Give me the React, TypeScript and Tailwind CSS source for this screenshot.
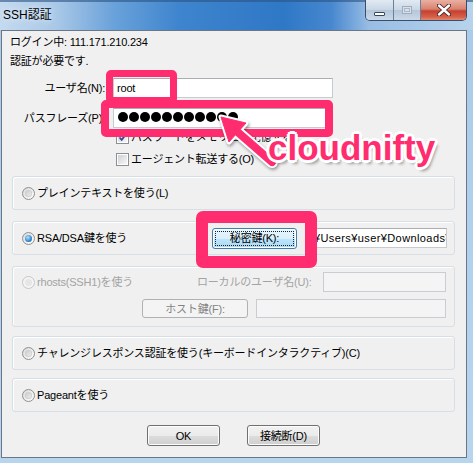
import React from 'react';

const Radio: React.FC<{ checked?: boolean; disabled?: boolean }> = ({ checked, disabled }) => {
  if (disabled) {
    return (
      <span className="flex h-[13px] w-[13px] shrink-0 items-center justify-center rounded-full border border-[#c4c7ca] bg-[#f4f4f4]">
        <span className="h-[7px] w-[7px] rounded-full bg-[#e6e6e6]" />
      </span>
    );
  }
  return (
    <span className="flex h-[13px] w-[13px] shrink-0 items-center justify-center rounded-full border border-[#8e8f8f] bg-[linear-gradient(135deg,#d9d9d9,#ffffff)]">
      {checked ? (
        <span className="h-[7px] w-[7px] rounded-full bg-[radial-gradient(circle_at_40%_35%,#b4e3fc_0%,#3b8fd6_55%,#0d4f92_100%)]" />
      ) : (
        <span className="h-[7px] w-[7px] rounded-full bg-[linear-gradient(135deg,#c6c6c6,#f4f4f4)] shadow-[inset_0_0_0_1px_#d2d2d2]" />
      )}
    </span>
  );
};

const Check: React.FC<{ checked?: boolean }> = ({ checked }) => (
  <span className="flex h-[13px] w-[13px] shrink-0 items-center justify-center border border-[#8e8f8f] bg-white">
    <span className="flex h-[9px] w-[9px] items-center justify-center bg-[linear-gradient(135deg,#cdd1d6,#f7f7f7)]">
      {checked && (
        <svg width="9" height="9" viewBox="0 0 9 9">
          <path d="M1.5 4.5 L3.7 6.8 L7.6 1.8" fill="none" stroke="#2a4f8a" strokeWidth="1.8" />
        </svg>
      )}
    </span>
  </span>
);

const Field: React.FC<{ className: string; disabled?: boolean; children?: React.ReactNode }> = ({ className, disabled, children }) => (
  <div
    className={`flex items-center overflow-hidden whitespace-nowrap border ${
      disabled ? 'border-[#c9ccd1] bg-[#f4f4f4]' : 'border-[#c6cbd2] border-t-[#abadb3] bg-white'
    } ${className}`}
  >
    {children}
  </div>
);

const Button: React.FC<{ className: string; focused?: boolean; disabled?: boolean; children: React.ReactNode }> = ({
  className,
  focused,
  disabled,
  children,
}) => {
  if (disabled) {
    return (
      <div className={`flex items-center justify-center rounded-[3px] border border-[#adb2b5] bg-[#f4f4f4] text-[#838383] ${className}`}>
        {children}
      </div>
    );
  }
  if (focused) {
    return (
      <div className={`flex items-center justify-center rounded-[3px] border border-[#3c7fb1] bg-[linear-gradient(#eaf6fd_0%,#d9f0fc_50%,#bee6fd_51%,#a7d9f5_100%)] p-[2px] shadow-[inset_0_0_0_1px_#ffffff] ${className}`}>
        <span className="flex h-full w-full items-center justify-center border border-dotted border-[#222]">{children}</span>
      </div>
    );
  }
  return (
    <div className={`flex items-center justify-center rounded-[3px] border border-[#707070] bg-[linear-gradient(#f2f2f2_0%,#ebebeb_50%,#dddddd_51%,#cfcfcf_100%)] shadow-[inset_0_0_0_1px_#fcfcfc] ${className}`}>
      {children}
    </div>
  );
};

const Group: React.FC<{ className: string; children: React.ReactNode }> = ({ className, children }) => (
  <div className={`ml-[10px] w-[443px] rounded-[3px] border border-[#d5dfe5] shadow-[inset_1px_1px_0_#ffffff] ${className}`}>{children}</div>
);

const TitleBar = () => (
  <div className="relative flex h-[30px] items-center bg-[linear-gradient(90deg,#c4daef_0%,#a9c8e7_12%,#6aa2da_24%,#3e84ce_38%,#2f78c6_60%,#4787cf_70%,#98bde4_78%,#b8d3ec_100%)]">
    <div className="absolute left-0 right-0 top-0 h-[2px] bg-[#2b5384]/60" />
    <span className="pl-[3px] pb-[1px] text-[12px] tracking-normal text-black [text-shadow:0_0_6px_#ffffff]">SSH認証</span>
    <div className="absolute right-[6px] top-0 flex h-[21px] overflow-hidden rounded-b-[5px] border border-t-0 border-[#3a4e6a]">
      <div className="flex w-[28px] items-end justify-center border-r border-[#6c7f98] bg-[linear-gradient(#e2eaf3,#c9d6e4_50%,#b5c6da_51%,#cbd9e7)] pb-[4px]">
        <span className="h-[4px] w-[11px] rounded-[1px] border border-[#34495f] bg-white" />
      </div>
      <div className="flex w-[27px] items-center justify-center border-r border-[#6c7f98] bg-[linear-gradient(#e2eaf3,#c9d6e4_50%,#b5c6da_51%,#cbd9e7)]">
        <span className="flex h-[8px] w-[10px] items-center justify-center border border-[#9eacbc] bg-[#d8e1eb]">
          <span className="h-[4px] w-[6px] border border-[#aab7c6]" />
        </span>
      </div>
      <div className="flex w-[45px] items-center justify-center bg-[linear-gradient(#eab0a2,#d98271_45%,#c5412e_55%,#d6604b_85%,#e08a6e)]">
        <svg width="14" height="12" viewBox="0 0 14 12">
          <path d="M2 1.5 L12 10.5 M12 1.5 L2 10.5" stroke="#4a2320" strokeWidth="4.2" strokeLinecap="round" />
          <path d="M2 1.5 L12 10.5 M12 1.5 L2 10.5" stroke="#ffffff" strokeWidth="2.4" strokeLinecap="round" />
        </svg>
      </div>
    </div>
  </div>
);

export default function App() {
  return (
    <div className="relative h-[463px] w-[473px] overflow-hidden bg-[linear-gradient(#a9cbe9,#b8d5ee)] font-['Liberation_Sans','Noto_Sans_CJK_JP',sans-serif] text-[11px] leading-[14px] tracking-[-0.2px] text-black">
      <TitleBar />
      <div className="ml-[1px] h-[428px] w-[466px] border border-[#6b7786] bg-[#f0f0f0]">
        <div className="flex h-[22px] items-center pl-[8px]">ログイン中: 111.171.210.234</div>
        <div className="flex h-[16px] items-center pl-[8px]">認証が必要です.</div>

        <div className="mt-[9px] flex h-[20px] items-center">
          <span className="w-[103px] text-right">ユーザ名(N):</span>
          <Field className="ml-[8px] h-[20px] w-[220px] pl-[3px]">root</Field>
        </div>
        <div className="mt-[10px] flex h-[20px] items-center">
          <span className="w-[103px] text-right">パスフレーズ(P):</span>
          <Field className="ml-[8px] h-[20px] w-[220px] gap-[1px] pb-[3px] pl-[4px]">
            {Array.from({ length: 11 }).map((_, i) => (
              <span key={i} className="h-[10px] w-[10px] shrink-0 rounded-full bg-black" />
            ))}
          </Field>
        </div>
        <div className="flex h-[18px] items-center gap-[2px] pl-[114px]">
          <Check checked />
          <span>パスワードをメモリ上に記憶する</span>
        </div>
        <div className="mt-[5px] flex h-[16px] items-center gap-[2px] pl-[114px]">
          <Check />
          <span>エージェント転送する(O)</span>
        </div>

        <Group className="mt-[9px] flex h-[34px] items-center gap-[2px] pl-[9px]">
          <Radio />
          <span>プレインテキストを使う(L)</span>
        </Group>

        <Group className="mt-[11px] flex h-[34px] items-center">
          <div className="flex w-[199px] items-center gap-[2px] pl-[9px]">
            <Radio checked />
            <span>RSA/DSA鍵を使う</span>
          </div>
          <Button focused className="h-[21px] w-[85px]">
            秘密鍵(K):
          </Button>
          <Field className="ml-[19px] h-[20px] w-[131px]">
            <span className="ml-[-3px] tracking-[0.4px]">¥Users¥user¥Downloads¥id_rsa</span>
          </Field>
        </Group>

        <Group className="mt-[11px] h-[61px] pt-[5px]">
          <div className="flex h-[20px] items-center">
            <div className="flex w-[184px] items-center gap-[2px] pl-[9px] text-[#a3a3a3]">
              <Radio disabled />
              <span>rhosts(SSH1)を使う</span>
            </div>
            <span className="w-[126px] text-[#a3a3a3]">ローカルのユーザ名(U):</span>
            <Field disabled className="h-[20px] w-[123px]" />
          </div>
          <div className="mt-[7px] flex h-[19px] items-center pl-[129px]">
            <Button disabled className="h-[19px] w-[106px]">
              ホスト鍵(F):
            </Button>
            <Field disabled className="ml-[8px] h-[19px] w-[190px]" />
          </div>
        </Group>

        <Group className="mt-[9px] flex h-[34px] items-center gap-[2px] pl-[9px]">
          <Radio />
          <span>チャレンジレスポンス認証を使う(キーボードインタラクティブ)(C)</span>
        </Group>

        <Group className="mt-[8px] flex h-[34px] items-center gap-[2px] pl-[9px]">
          <Radio />
          <span>Pageantを使う</span>
        </Group>

        <div className="mt-[13px] flex h-[21px] gap-[27px] pl-[145px]">
          <Button className="h-[21px] w-[73px]">OK</Button>
          <Button className="h-[21px] w-[73px]">接続断(D)</Button>
        </div>
      </div>

      {/* pink annotations */}
      <div className="pointer-events-none absolute left-[106px] top-[70px] h-[34px] w-[71px] rounded-[5px] border-[7px] border-[#ff2d6f]" />
      <div className="pointer-events-none absolute left-[101px] top-[100px] h-[37px] w-[232px] rounded-[5px] border-[8px] border-[#ff2d6f]" />
      <div className="pointer-events-none absolute left-[196px] top-[211px] h-[57px] w-[121px] rounded-[7px] border-[12px] border-[#ff2d6f]" />
      <svg className="pointer-events-none absolute left-0 top-0 drop-shadow-[1px_2px_1.5px_rgba(0,0,0,0.35)]" width="473" height="463">
        <line x1="233" y1="128" x2="272" y2="162" stroke="#ffffff" strokeWidth="12" strokeLinecap="round" />
        <polygon points="221,117 246,123 229,142" fill="#ffffff" stroke="#ffffff" strokeWidth="5" strokeLinejoin="round" />
        <line x1="233" y1="128" x2="272" y2="162" stroke="#ff2d6f" strokeWidth="8" strokeLinecap="round" />
        <polygon points="221,117 246,123 229,142" fill="#ff2d6f" stroke="#ff2d6f" strokeWidth="1" strokeLinejoin="round" />
      </svg>
      <span className="pointer-events-none absolute left-[268px] top-[130px] font-['Liberation_Sans',sans-serif] text-[35px] font-bold leading-[35px] tracking-normal text-[#ff2d6f] [text-shadow:3px_0_0_#fff,-3px_0_0_#fff,0_3px_0_#fff,0_-3px_0_#fff,2px_2px_0_#fff,-2px_-2px_0_#fff,2px_-2px_0_#fff,-2px_2px_0_#fff,3px_4px_3px_rgba(0,0,0,0.35)]">
        cloudnifty
      </span>
    </div>
  );
}
